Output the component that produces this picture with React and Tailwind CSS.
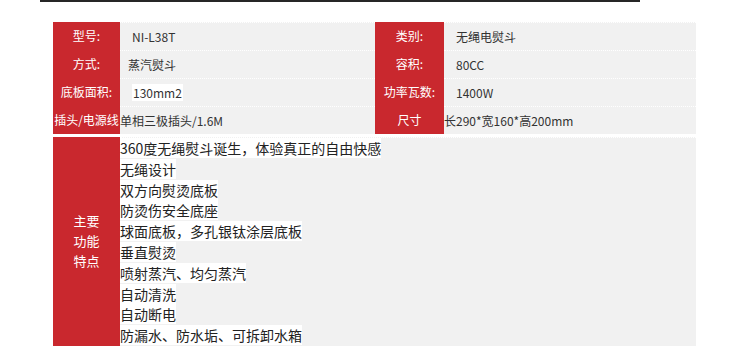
const specs = [
  ['型号:', 'NI-L38T', '类别:', '无绳电熨斗'],
  ['方式:', '蒸汽熨斗', '容积:', '80CC'],
  ['底板面积:', '130mm2', '功率瓦数:', '1400W'],
  ['插头/电源线', '单相三极插头/1.6M', '尺寸', '长290*宽160*高200mm'],
];

const features = [
  '360度无绳熨斗诞生，体验真正的自由快感',
  '无绳设计',
  '双方向熨烫底板',
  '防烫伤安全底座',
  '球面底板，多孔银钛涂层底板',
  '垂直熨烫',
  '喷射蒸汽、均匀蒸汽',
  '自动清洗',
  '自动断电',
  '防漏水、防水垢、可拆卸水箱',
];

const font = { fontFamily: '"SimSun", "Noto Sans CJK SC", "Liberation Sans", sans-serif' };

export default function App() {
  return (
    <div className="w-[750px] h-[348px] bg-white overflow-hidden" style={font}>
      <div className="ml-[40px] w-[600px] h-[2px] bg-[#262626]" />
      <div className="ml-[53px] w-[643px] mt-[20px]">
        {specs.map((r, i) => (
          <div key={i} className="flex h-[28px] text-[12px] leading-[28px]">
            <div className="w-[67px] shrink-0 bg-[#c9282e] text-white text-center whitespace-nowrap flex justify-center">
              <span>{r[0]}</span>
            </div>
            <div className={`w-[255px] shrink-0 bg-[#f1f1f1] text-[#333] border-t border-dotted border-white ${i === 3 ? 'pl-0' : i === 1 ? 'pl-[8px]' : 'pl-[12px]'}`}>
              <span className={i === 2 ? 'bg-white px-[1px]' : ''}>{r[1]}</span>
            </div>
            <div className="w-[69px] shrink-0 bg-[#c9282e] text-white text-center whitespace-nowrap">
              {r[2]}
            </div>
            <div className={`flex-1 bg-[#f1f1f1] text-[#333] border-t border-dotted border-white ${i === 3 ? 'pl-0' : 'pl-[12px]'}`}>
              {r[3]}
            </div>
          </div>
        ))}
        <div className="flex mt-[3px]">
          <div className="w-[67px] shrink-0 bg-[#c9282e] text-white text-[13px] leading-[20px] flex items-center justify-center text-center">
            <div>主要<br />功能<br />特点</div>
          </div>
          <div className="flex-1 bg-[#f1f1f1] border-t border-dotted border-white text-[14px] leading-[20.8px] text-[#222]">
            {features.map((f, i) => (
              <div key={i}>
                <span className="bg-white">{f}</span>
              </div>
            ))}
          </div>
        </div>
      </div>
    </div>
  );
}
